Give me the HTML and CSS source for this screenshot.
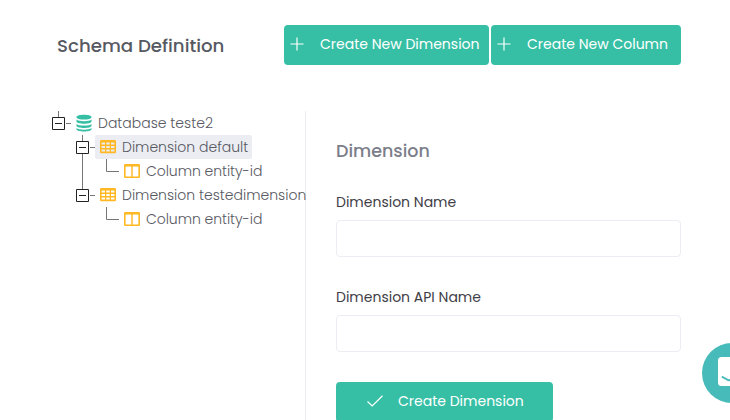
FILE: index.html
```html
<!DOCTYPE html>
<html lang="en">
<head>
<meta charset="utf-8">
<title>Schema Definition</title>
<link rel="stylesheet" href="styles.css">
</head>
<body>
<svg class="defs" width="0" height="0">
  <symbol id="db" viewBox="0 0 16 18"><path d="M.5 3.200C.5 0 15.500 0 15.500 3.200S.5 6.400 .5 3.200zM.5 5.600c2 2.200 13 2.200 15 0v1.800c0 3-15 3-15 0zM.5 9.900c2 2.200 13 2.200 15 0v1.800c0 3-15 3-15 0zM.5 14c2 2.200 13 2.200 15 0v1.300c0 3-15 3-15 0z" fill="#36bfa4"/></symbol>
  <symbol id="table" viewBox="0 0 16 14"><path fill="#ffb822" fill-rule="evenodd" d="M1.200 0h13.600Q16 0 16 1.200v10.800q0 1.200-1.200 1.200H1.200Q0 13.200 0 12V1.200Q0 0 1.200 0zM1.600 2.400v2.200H5V2.400zM6.300 2.400v2.200h3.400V2.400zM11 2.400v2.200h3.400V2.400zM1.600 6v2H5V6zM6.300 6v2h3.400V6zM11 6v2h3.400V6zM1.600 9.400v2.200H5V9.400zM6.300 9.400v2.200h3.400V9.400zM11 9.400v2.200h3.400V9.400z"/></symbol>
  <symbol id="column" viewBox="0 0 16 14"><path fill="#ffb822" fill-rule="evenodd" d="M1.200 0h13.600Q16 0 16 1.200v11.600q0 1.200-1.200 1.200H1.200Q0 14 0 12.800V1.200Q0 0 1.200 0zM1.600 2.500v9.900h5.700V2.500zM8.700 2.500v9.900h5.700V2.500z"/></symbol>
  <symbol id="plus" viewBox="0 0 14 14"><path d="M7 .5v13M.5 7h13" stroke="#fff" stroke-width="1.200" fill="none"/></symbol>
  <symbol id="open" viewBox="0 0 24 24"><path d="M11.500 0v6M19 12.500h5" stroke="#777" fill="none"/><path d="M5.500 6.500h12v12h-12zM8 12.500h7" stroke="#222" fill="none"/></symbol>
  <symbol id="open-mid" viewBox="0 0 24 24"><path d="M11.500 0v6M11.500 19v5M19 12.500h5" stroke="#777" fill="none"/><path d="M5.500 6.500h12v12h-12zM8 12.500h7" stroke="#222" fill="none"/></symbol>
  <symbol id="line" viewBox="0 0 24 24"><path d="M11.500 0v24" stroke="#777" fill="none"/></symbol>
  <symbol id="leaf" viewBox="0 0 24 24"><path d="M11.500 0v12.500H24" stroke="#777" fill="none"/></symbol>
</svg>
<header class="header">
  <h1 class="title">Schema Definition</h1>
  <div class="actions">
    <button class="btn btn-dimension"><svg class="plus"><use href="#plus"/></svg><span>Create New Dimension</span></button>
    <button class="btn btn-column"><svg class="plus"><use href="#plus"/></svg><span>Create New Column</span></button>
  </div>
</header>
<main class="main">
  <section class="tree">
    <div class="row"><svg class="cell"><use href="#open"/></svg><div class="node"><svg class="icon db"><use href="#db"/></svg><span>Database teste2</span></div></div>
    <div class="row"><i class="cell"></i><svg class="cell"><use href="#open-mid"/></svg><div class="node selected"><svg class="icon"><use href="#table"/></svg><span>Dimension default</span></div></div>
    <div class="row"><i class="cell"></i><svg class="cell"><use href="#line"/></svg><svg class="cell"><use href="#leaf"/></svg><div class="node"><svg class="icon"><use href="#column"/></svg><span class="column-name">Column entity-id</span></div></div>
    <div class="row"><i class="cell"></i><svg class="cell"><use href="#open"/></svg><div class="node"><svg class="icon"><use href="#table"/></svg><span>Dimension testedimension</span></div></div>
    <div class="row"><i class="cell"></i><i class="cell"></i><svg class="cell"><use href="#leaf"/></svg><div class="node"><svg class="icon"><use href="#column"/></svg><span class="column-name">Column entity-id</span></div></div>
  </section>
  <form class="form">
    <h2 class="subtitle">Dimension</h2>
    <label class="label" for="name">Dimension Name</label>
    <input class="input" id="name" type="text">
    <label class="label" for="api">Dimension API Name</label>
    <input class="input" id="api" type="text">
    <button class="btn submit" type="button"><svg class="check" viewBox="0 0 16 12"><path d="M.5 6.500l4.700 4.500L15.500.8" stroke="#fff" stroke-width="1.200" fill="none"/></svg><span>Create Dimension</span></button>
  </form>
</main>
<div class="chat"><svg width="60" height="60" viewBox="0 0 60 60"><rect x="16" y="14" width="28" height="29" rx="3.500" fill="#fff"/><path d="M20.500 34q9.500 7 19 0" stroke="#47bbb9" stroke-width="2" stroke-linecap="round" fill="none"/></svg></div>
</body>
</html>
```

FILE: styles.css
```css
* { box-sizing: border-box; }
body {
  margin: 0;
  height: 420px;
  overflow: hidden;
  background: #fff;
  font-family: Poppins, Inter, "Open Sans", sans-serif;
  color: #4b4b50;
}
.defs { display: block; }
svg { flex: none; }
span { white-space: nowrap; }
.header {
  display: flex;
  justify-content: space-between;
  align-items: center;
  height: 40px;
  margin: 25px 49px 0 57px;
}
.title { margin: 0; font-size: 18.2px; font-weight: 500; color: #575962; }
.actions { display: flex; gap: 2px; }
.btn {
  display: flex;
  align-items: center;
  height: 40px;
  padding: 0 0 2px 6px;
  border: 0;
  border-radius: 4px;
  background: #36bfa4;
  color: #fff;
  font: 400 14px Poppins, Inter, "Open Sans", sans-serif;
}
.btn-dimension { width: 205px; }
.btn-column { width: 190px; }
.plus { width: 14px; height: 14px; margin-right: 16px; }
.main { display: flex; height: 309px; margin: 46px 49px 0 47px; }
.tree { width: 259px; border-right: 1px solid #ebedf2; }
.row { display: flex; height: 24px; }
.cell { flex: none; width: 24px; height: 24px; }
.node {
  display: flex;
  align-items: center;
  height: 24px;
  padding: 0 4px 0 5px;
  border-radius: 2px;
  font-size: 14px;
  font-weight: 300;
  color: #575962;
}
.selected { background: #ebedf2; }
.column-name { letter-spacing: -0.05px; }
.icon { width: 16px; height: 14px; margin-right: 6px; }
.db { height: 18px; }
.form { width: 375px; padding: 30px 0 0 30px; }
.subtitle { margin: 0 0 30px; font-size: 17.5px; line-height: 20px; font-weight: 500; color: #7b7e8a; }
.label { display: block; height: 22px; font-size: 14px; line-height: 22px; margin-bottom: 7px; color: #3f4047; }
.input {
  display: block;
  width: 345px;
  height: 37px;
  margin: 0 0 29px;
  border: 1px solid #ebedf2;
  border-radius: 4px;
}
.submit { width: 217px; padding-left: 31px; margin-top: 30px; }
.check { width: 16px; height: 12px; margin-right: 15px; }
.chat {
  position: absolute;
  left: 702px;
  top: 343px;
  width: 60px;
  height: 60px;
  border-radius: 50%;
  background: #47bbb9;
}
```
